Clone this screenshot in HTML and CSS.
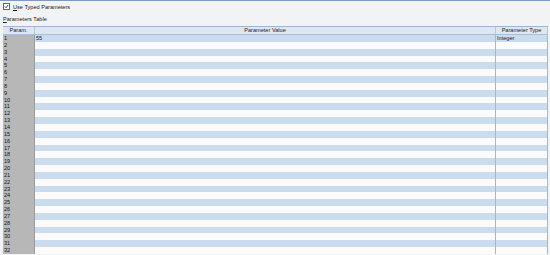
FILE: index.html
```html
<!DOCTYPE html>
<html>

<head>
  <meta charset="utf-8" />
  <title>Parameters Table</title>
  <link rel="stylesheet" href="styles.css">
</head>

<body>
  <div class="top-bar"></div>

  <!-- options -->
  <label class="check-row">
    <span class="check-box">
      <svg width="6" height="6" viewBox="0 0 6 6">
        <path d="M1 3 L2.5 4.5 L5 1.2" fill="none" stroke="#222" stroke-width="1" />
      </svg>
    </span>
    <span><u>U</u>se Typed Parameters</span>
  </label>

  <div class="caption"><u>P</u>arameters Table</div>

  <!-- table -->
  <div class="grid">
    <div class="row head">
      <div class="cell num">Param.</div>
      <div class="cell">Parameter Value</div>
      <div class="cell">Parameter Type</div>
    </div>
    <div class="row"><div class="cell num">1</div><div class="cell val">55</div><div class="cell val">Integer</div></div>
    <div class="row"><div class="cell num">2</div><div class="cell val"></div><div class="cell val"></div></div>
    <div class="row"><div class="cell num">3</div><div class="cell val"></div><div class="cell val"></div></div>
    <div class="row"><div class="cell num">4</div><div class="cell val"></div><div class="cell val"></div></div>
    <div class="row"><div class="cell num">5</div><div class="cell val"></div><div class="cell val"></div></div>
    <div class="row"><div class="cell num">6</div><div class="cell val"></div><div class="cell val"></div></div>
    <div class="row"><div class="cell num">7</div><div class="cell val"></div><div class="cell val"></div></div>
    <div class="row"><div class="cell num">8</div><div class="cell val"></div><div class="cell val"></div></div>
    <div class="row"><div class="cell num">9</div><div class="cell val"></div><div class="cell val"></div></div>
    <div class="row"><div class="cell num">10</div><div class="cell val"></div><div class="cell val"></div></div>
    <div class="row"><div class="cell num">11</div><div class="cell val"></div><div class="cell val"></div></div>
    <div class="row"><div class="cell num">12</div><div class="cell val"></div><div class="cell val"></div></div>
    <div class="row"><div class="cell num">13</div><div class="cell val"></div><div class="cell val"></div></div>
    <div class="row"><div class="cell num">14</div><div class="cell val"></div><div class="cell val"></div></div>
    <div class="row"><div class="cell num">15</div><div class="cell val"></div><div class="cell val"></div></div>
    <div class="row"><div class="cell num">16</div><div class="cell val"></div><div class="cell val"></div></div>
    <div class="row"><div class="cell num">17</div><div class="cell val"></div><div class="cell val"></div></div>
    <div class="row"><div class="cell num">18</div><div class="cell val"></div><div class="cell val"></div></div>
    <div class="row"><div class="cell num">19</div><div class="cell val"></div><div class="cell val"></div></div>
    <div class="row"><div class="cell num">20</div><div class="cell val"></div><div class="cell val"></div></div>
    <div class="row"><div class="cell num">21</div><div class="cell val"></div><div class="cell val"></div></div>
    <div class="row"><div class="cell num">22</div><div class="cell val"></div><div class="cell val"></div></div>
    <div class="row"><div class="cell num">23</div><div class="cell val"></div><div class="cell val"></div></div>
    <div class="row"><div class="cell num">24</div><div class="cell val"></div><div class="cell val"></div></div>
    <div class="row"><div class="cell num">25</div><div class="cell val"></div><div class="cell val"></div></div>
    <div class="row"><div class="cell num">26</div><div class="cell val"></div><div class="cell val"></div></div>
    <div class="row"><div class="cell num">27</div><div class="cell val"></div><div class="cell val"></div></div>
    <div class="row"><div class="cell num">28</div><div class="cell val"></div><div class="cell val"></div></div>
    <div class="row"><div class="cell num">29</div><div class="cell val"></div><div class="cell val"></div></div>
    <div class="row"><div class="cell num">30</div><div class="cell val"></div><div class="cell val"></div></div>
    <div class="row"><div class="cell num">31</div><div class="cell val"></div><div class="cell val"></div></div>
    <div class="row"><div class="cell num">32</div><div class="cell val"></div><div class="cell val"></div></div>
  </div>
</body>

</html>
```

FILE: styles.css
```css
body {
  margin: 0;
  background: #f2f3f5;
  color: #1a1a1a;
  font-family: "Liberation Sans", Arial, sans-serif;
  font-size: 5.6px;
  overflow: hidden;
}

.top-bar {
  height: 1px;
  background: #7f9bbd;
}

.check-row {
  display: flex;
  align-items: center;
  gap: 3px;
  padding: 2px 0 0 3px;
  height: 7px;
}

.check-box {
  width: 5px;
  height: 5px;
  border: 1px solid #666;
  background: white;
  display: flex;
}

.check-box svg {
  width: 5px;
  height: 5px;
}

.caption {
  padding: 6px 0 0 3px;
  height: 8px;
}

.grid {
  margin: 2px 2px 0 3px;
  border-top: 1px solid #9fb6d2;
}

.row {
  display: grid;
  grid-template-columns: 32px 1fr 52px;
  height: 6.85px;
  line-height: 6.85px;
}

.row.head {
  height: 7px;
  line-height: 7px;
  background: #dde7f2;
  border-bottom: 1px solid #a9bfd8;
  text-align: center;
}

.cell {
  border-right: 1px solid #a8b6c6;
  padding: 0 1px;
  white-space: nowrap;
  overflow: hidden;
}

.row.head .cell {
  border-right: 1px solid #b9c7d6;
}

.cell.num {
  background: #b7b7b7;
  border-right: 1px solid #9a9a9a;
}

.row.head .cell.num {
  background: #dde7f2;
}

.row:nth-child(even) .val {
  background: #cbdcef;
}

.row:nth-child(odd) .val {
  background: #fbfbfb;
}
```
